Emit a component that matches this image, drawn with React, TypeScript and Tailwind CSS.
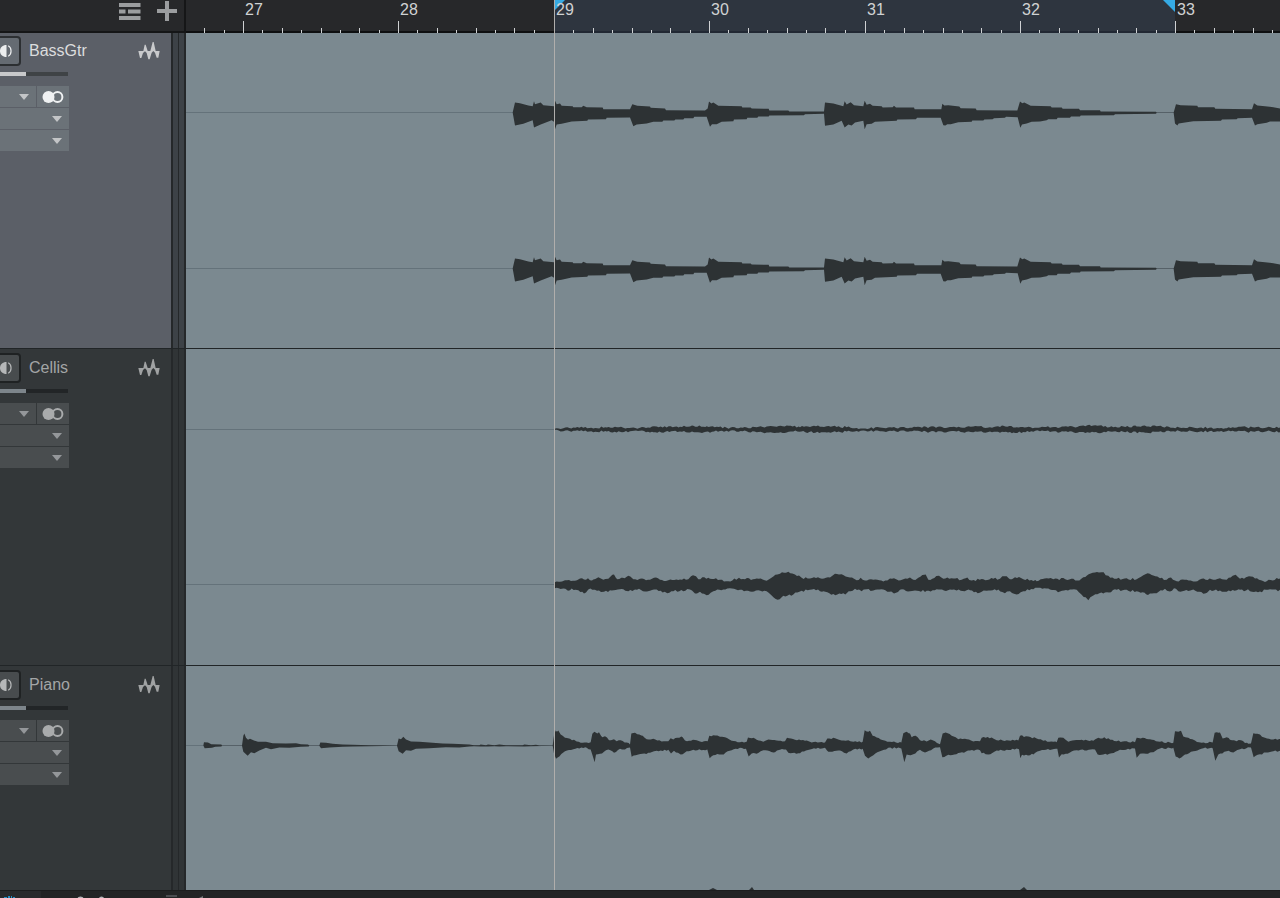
import React from "react";

type Points = [number, number][];

// Turns "x,y x,y" into pairs; units are thirds of a pixel.
const parse = (s: string): Points =>
  s.trim().split(/\s+/).map((p) => p.split(",").map(Number) as [number, number]);

// Adds small deterministic ripples between the control points.
function ripple(points: Points, amount: number): Points {
  if (!amount) return points;
  const out: Points = [];
  for (let i = 0; i < points.length - 1; i++) {
    const [x0, y0] = points[i];
    const [x1, y1] = points[i + 1];
    out.push([x0, y0]);
    for (let x = x0 + 6; x < x1 - 3; x += 6) {
      const t = (x - x0) / (x1 - x0);
      const n = Math.sin(x * 12.9898) * 43758.5453;
      out.push([x, y0 + (y1 - y0) * t + (n - Math.floor(n) - 0.5) * amount]);
    }
  }
  out.push(points[points.length - 1]);
  return out;
}

const BASS_TOP = `38,157 45,127 60,129 85,136 98,138 102,123 105,132 122,127 130,135 162,138 165,122 170,132 180,130 185,137 218,138 220,141 245,141 250,137 260,141 308,142 310,147 390,147 397,132 412,137 450,139 452,143 495,145 498,150 615,151 623,145 627,124 634,130 640,127 655,137 725,138 727,142 752,142 755,145 806,146 808,151 865,151 868,154 972,154 975,127 1000,130 1030,138 1034,123 1040,133 1052,126 1062,135 1090,138 1094,122 1100,134 1110,131 1118,137 1145,138 1148,142 1178,141 1182,137 1188,142 1242,142 1244,147 1324,147 1327,131 1333,136 1345,135 1378,139 1382,144 1427,145 1430,150 1552,151 1560,124 1567,129 1573,127 1592,137 1652,138 1655,142 1685,142 1688,146 1737,146 1740,150 1800,150 1802,154 1968,155 1970,157 2021,157 2028,132 2042,135 2092,137 2094,141 2143,141 2146,146 2256,147 2262,129 2272,136 2295,138 2320,141 2345,146`;
const BASS_BOTTOM = `38,157 45,196 70,191 98,180 102,202 122,193 155,180 162,185 165,207 170,193 185,191 215,184 262,182 264,178 318,177 320,173 390,172 400,198 410,193 440,190 460,185 487,185 490,181 523,181 526,178 550,178 553,174 580,174 583,170 620,170 630,200 636,192 650,192 665,185 700,183 702,178 740,177 742,173 772,173 775,169 806,169 808,166 912,165 915,162 972,161 975,197 1000,193 1025,182 1034,202 1045,193 1055,196 1065,187 1090,182 1094,207 1100,192 1115,191 1125,185 1190,182 1192,178 1248,177 1251,173 1322,173 1330,195 1336,196 1342,192 1352,192 1375,186 1415,185 1417,181 1450,181 1453,178 1478,177 1482,174 1515,173 1518,170 1553,171 1561,203 1566,193 1580,190 1595,185 1620,184 1640,180 1645,177 1670,177 1673,173 1710,173 1713,169 1740,169 1742,166 1842,165 1845,162 1968,161 1970,158 2021,158 2025,190 2032,196 2036,190 2055,187 2080,183 2163,182 2166,178 2210,177 2213,174 2256,173 2265,196 2272,192 2300,188 2310,184 2345,184`;

const CELLO_TOP = `44,97 60,96 75,91 105,93 120,86 160,89 175,82 190,90 205,87 222,74 232,88 248,84 265,78 280,88 300,87 330,90 348,83 360,90 385,91 420,89 445,88 453,79 468,79 475,88 493,82 510,87 540,90 565,94 597,84 615,88 650,86 685,90 700,80 720,72 745,66 765,74 785,84 810,86 840,85 870,83 885,72 905,73 930,83 950,91 962,84 975,92 1000,90 1030,95 1050,86 1070,89 1090,88 1110,83 1120,90 1135,84 1157,74 1165,90 1197,78 1210,87 1240,86 1265,90 1282,83 1295,92 1330,88 1380,87 1387,79 1400,79 1410,88 1425,82 1450,88 1490,94 1520,85 1540,88 1600,87 1618,92 1640,78 1665,68 1685,67 1705,78 1730,87 1790,88 1810,76 1823,70 1840,77 1860,85 1880,90 1893,83 1910,94 1940,90 1960,95 1985,87 2020,90 2040,85 2060,90 2087,75 2100,87 2127,79 2145,86 2180,94 2225,83`;
const CELLO_BOTTOM = `44,115 70,116 84,123 95,116 115,121 132,131 145,119 165,120 192,126 215,122 250,118 265,124 285,119 330,123 350,119 382,130 400,124 430,124 450,119 465,131 480,126 500,136 520,124 550,119 570,115 600,120 630,125 655,121 680,124 695,137 713,150 730,138 760,134 785,123 810,120 850,124 886,136 920,130 945,117 965,124 980,118 1000,122 1030,119 1062,131 1080,120 1110,124 1125,122 1160,123 1200,119 1250,122 1290,121 1313,130 1340,123 1375,119 1395,130 1410,124 1430,134 1450,124 1495,114 1530,119 1560,125 1610,120 1625,135 1645,151 1660,137 1695,128 1730,120 1790,124 1818,133 1850,130 1875,117 1890,125 1902,115 1915,124 1960,119 1995,131 2010,120 2060,126 2100,120 2160,125 2190,118 2225,124`;

const SOFT_TOP = `44,102 70,100 130,99 200,98 225,96 250,99 300,99 350,95 420,96 460,93 500,94 560,99 620,98 680,95 740,92 780,97 860,94 920,97 970,101 1020,98 1110,99 1170,96 1250,98 1300,95 1350,97 1390,93 1430,97 1500,98 1600,96 1660,92 1720,97 1790,95 1850,94 1900,99 1960,98 2060,100 2120,97 2180,98 2225,97`;
const SOFT_BOTTOM = `44,105 70,109 130,109 200,110 240,111 300,108 340,112 420,110 480,113 560,108 620,109 680,113 710,114 760,110 860,113 920,110 970,107 1020,109 1110,109 1170,111 1250,110 1300,112 1350,110 1420,113 1500,109 1600,112 1650,114 1720,110 1820,114 1900,109 1960,110 2060,109 2120,111 2180,109 2225,111`;

const PIANO_TOP = `38,91 42,60 47,46 51,50 55,46 62,58 75,68 90,71 110,79 140,82 152,81 157,56 163,50 172,55 177,51 187,66 195,63 207,75 222,72 230,78 242,75 260,82 270,88 274,55 285,53 292,57 308,62 320,72 340,71 365,79 385,78 392,69 400,73 412,68 428,66 435,76 470,75 480,79 503,78 508,62 520,60 540,65 555,66 575,77 600,81 620,80 624,67 640,68 650,74 670,80 685,73 710,76 735,78 741,68 765,74 800,76 815,82 855,82 862,70 885,69 905,76 925,75 940,80 968,80 974,45 985,50 990,47 998,62 1010,67 1030,75 1050,80 1084,82 1090,54 1100,50 1110,55 1115,66 1127,62 1140,75 1160,79 1172,73 1185,78 1200,87 1208,55 1217,52 1235,62 1255,72 1275,71 1300,79 1320,78 1325,68 1355,67 1370,75 1435,76 1440,62 1465,64 1490,70 1510,77 1550,81 1555,68 1570,68 1585,80 1625,74 1660,77 1675,68 1705,69 1730,78 1785,81 1790,68 1830,72 1860,80 1900,83 1905,48 1915,50 1923,47 1930,64 1945,68 1965,76 1985,83 2018,82 2024,53 2040,52 2048,70 2060,66 2070,74 2090,78 2103,75 2125,86 2133,85 2140,54 2160,58 2175,68 2200,73 2225,70`;
const PIANO_BOTTOM = `38,91 42,115 48,131 58,124 75,108 100,102 140,98 152,103 158,122 164,141 168,118 180,116 205,103 222,113 240,101 255,103 270,97 275,125 295,118 330,113 350,107 385,104 393,115 402,107 422,118 440,108 460,104 502,103 509,129 520,120 545,118 575,105 600,98 618,101 626,124 635,115 650,116 670,105 705,111 720,104 738,103 745,113 780,114 810,103 855,98 865,110 900,106 920,115 940,103 968,101 975,122 985,130 1000,120 1020,108 1045,98 1084,100 1093,141 1100,118 1120,117 1140,104 1155,112 1180,100 1200,96 1207,126 1225,119 1260,113 1290,106 1320,105 1325,114 1345,118 1370,106 1437,102 1441,129 1446,119 1480,118 1500,107 1552,101 1557,127 1565,117 1590,112 1610,105 1640,106 1665,103 1673,118 1690,118 1715,114 1740,104 1785,100 1790,128 1800,116 1840,111 1860,100 1900,98 1907,124 1918,130 1935,118 1960,108 1990,99 2018,99 2026,137 2035,118 2060,108 2080,112 2100,102 2133,97 2141,126 2160,117 2200,108 2225,106`;

const INTRO_TOP = `52,91 54,81 66,82 76,87 106,88 108,91 168,91 172,62 175,55 180,68 186,74 192,71 204,76 216,80 240,80 260,84 300,85 330,84 345,87 366,88 370,91 400,91 403,82 420,83 440,86 470,88 500,89 550,90 633,91 638,70 645,72 652,65 660,73 675,79 700,80 730,82 770,85 800,86 850,88 864,90 880,90 884,88 900,90 906,88 925,90 940,88 960,90 1010,90 1015,88 1035,90 1050,89 1060,91 1104,91`;
const INTRO_BOTTOM = `52,91 56,99 78,98 88,95 106,94 108,92 168,92 172,110 185,122 195,111 205,114 220,106 240,98 255,102 280,97 310,98 345,95 368,94 370,92 400,92 405,99 430,97 470,95 500,94 550,93 633,92 638,108 650,116 660,105 675,107 690,101 730,99 780,96 820,97 850,94 864,93 884,94 906,94 925,93 940,94 960,93 1015,94 1035,93 1104,92`;

interface WaveProps {
  x: number;
  y: number;
  base: number;
  top: string;
  bottom: string;
  noise?: number;
}

function Wave({ x, y, base, top, bottom, noise = 0 }: WaveProps) {
  const outline = [...ripple(parse(top), noise), ...ripple(parse(bottom), noise).reverse()];
  return (
    <polygon
      transform={`translate(${x} ${y + 0.5}) scale(0.33333) translate(0 ${-base})`}
      points={outline.map((p) => p.join(",")).join(" ")}
      fill="#2d3234"
    />
  );
}

function ZeroLine({ y }: { y: number }) {
  return <rect x="0" y={y} width="100%" height="1" fill="#64727a" />;
}

function Caret({ className }: { className: string }) {
  return (
    <svg className={"pointer-events-none absolute top-2 h-1.5 w-2.5 " + className} viewBox="0 0 10 6" aria-hidden="true">
      <path d="M0 0H10L5 6Z" fill="currentColor" />
    </svg>
  );
}

function WaveIcon() {
  return (
    <svg className="block h-[18px] w-[22px]" viewBox="0 0 64 54" aria-hidden="true">
      <path
        d="M0 27H15L19 8H22L28 27H36L43 0H46L52 27H64L60 47H55L50 32L45 27L40 32L34 52H30L25 33L20 28L14 33L9 48H5Z"
        fill="currentColor"
      />
    </svg>
  );
}

interface Palette {
  panel: string;
  strip: string;
  field: string;
  button: string;
  slider: string;
  text: string;
  icon: string;
  stereo: string;
  caret: string;
}

const SELECTED: Palette = {
  panel: "bg-[#5b5f67]",
  strip: "bg-[#3d4247]",
  field: "bg-[#6b7278]",
  button: "bg-[#656b72] border-[#2c2f32] text-[#eceeef]",
  slider: "bg-[linear-gradient(to_right,#c8c9cb_26px,#3f4346_26px)]",
  text: "text-[#dcddde]",
  icon: "text-[#c9cacc]",
  stereo: "text-[#eff1f2]",
  caret: "text-[#c3c5c7]",
};

const NORMAL: Palette = {
  panel: "bg-[#333739]",
  strip: "bg-[#303436]",
  field: "bg-[#494d4f]",
  button: "bg-[#484c4e] border-[#1f2223] text-[#b5b7b8]",
  slider: "bg-[linear-gradient(to_right,#7d858b_26px,#222527_26px)]",
  text: "text-[#a3a5a6]",
  icon: "text-[#a0a2a3]",
  stereo: "text-[#a9abac]",
  caret: "text-[#94979a]",
};

function Field({ label, palette, width, caret }: { label: string; palette: Palette; width: string; caret: string }) {
  return (
    <div className={"relative h-[21px] " + width}>
      <select aria-label={label} className={"block h-full w-full appearance-none " + palette.field}>
        <option />
      </select>
      <Caret className={caret + " " + palette.caret} />
    </div>
  );
}

function Track({ name, selected, children }: { name: string; selected?: boolean; children: React.ReactNode }) {
  const p = selected ? SELECTED : NORMAL;
  return (
    <section className="flex h-[317px] shrink-0 border-b border-[#212527]">
      <div className={"w-[171px] shrink-0 overflow-hidden pt-1 " + p.panel}>
        <div className="flex h-[30px] items-center">
          <button aria-label={"Monitor " + name} className={"h-[30px] w-[21px] shrink-0 rounded-r-[4px] border-2 border-l-0 " + p.button}>
            <svg className="block h-3 w-3" viewBox="0 0 12 12" aria-hidden="true">
              <path d="M6.500 0V12C2.500 12 0 9.500 0 6S2.500 0 6.500 0Z" fill="currentColor" />
              <path d="M8.200 0.800C12 2.500 12 9.500 8.200 11.200" fill="none" stroke="currentColor" strokeWidth="1.2" />
            </svg>
          </button>
          <h2 className={"ml-2 flex-1 text-base leading-5 " + p.text}>{name}</h2>
          <span className={"mr-[11px] " + p.icon}>
            <WaveIcon />
          </span>
        </div>
        <input
          type="range"
          aria-label={name + " volume"}
          defaultValue={38}
          className={
            "mt-1.5 block h-1 w-[68px] appearance-none [&::-webkit-slider-thumb]:h-0 [&::-webkit-slider-thumb]:w-0 [&::-webkit-slider-thumb]:appearance-none " +
            p.slider
          }
        />
        <div className="mt-[10px] flex w-[69px] flex-col gap-px">
          <div className="flex gap-px">
            <Field label={name + " mode"} palette={p} width="w-9" caret="left-[19px]" />
            <button aria-label={name + " stereo"} className={"flex h-[21px] flex-1 items-center justify-center " + p.field + " " + p.stereo}>
              <svg className="h-3 w-[22px]" viewBox="0 0 22 12" aria-hidden="true">
                <circle cx="6.5" cy="6" r="6" fill="currentColor" />
                <circle cx="15.5" cy="6" r="4.9" fill="none" stroke="currentColor" strokeWidth="2" />
              </svg>
            </button>
          </div>
          <Field label={name + " input"} palette={p} width="w-full" caret="left-[52px]" />
          <Field label={name + " output"} palette={p} width="w-full" caret="left-[52px]" />
        </div>
      </div>
      <div className={"w-[15px] shrink-0 border-x-2 border-[#25282a] px-[5px] " + p.strip}>
        <div className="h-full w-px bg-[#25282a]" />
      </div>
      <div className="min-w-0 flex-1 bg-[#7b8990]">
        <svg className="block h-full w-full" role="img" aria-label={name + " waveform"}>
          {children}
        </svg>
      </div>
    </section>
  );
}

const BARS = [
  { n: 27, width: "w-[155px]", loop: false },
  { n: 28, width: "w-[156px]", loop: false },
  { n: 29, width: "w-[155px]", loop: true },
  { n: 30, width: "w-[156px]", loop: true },
  { n: 31, width: "w-[155px]", loop: true },
  { n: 32, width: "w-[155px]", loop: true },
  { n: 33, width: "w-[155px]", loop: false },
];

function Ticks({ from = 0 }: { from?: number }) {
  const shift = from ? 57 - 155 : 0;
  return (
    <svg className="absolute bottom-0 left-0 h-3 w-full" aria-hidden="true">
      {[0, 1, 2, 3, 4, 5, 6, 7].slice(from).map((i) => {
        const h = i === 0 ? 12 : i % 2 === 0 ? 5 : 3;
        return <rect key={i} x={Math.round(i * 19.4) + shift} y={12 - h} width="1" height={h} fill="#cfd1d3" />;
      })}
    </svg>
  );
}

export default function App() {
  return (
    <main className="relative flex h-screen flex-col overflow-hidden bg-[#232425] font-['Liberation_Sans',Arial,sans-serif]">
      <header className="relative -mb-px flex h-[33px] shrink-0 bg-[#27282a]">
        <div className="flex w-[186px] shrink-0 items-start justify-end gap-4 border-r-2 border-b-2 border-[#151617] pr-[7px] text-[#9b9d9f]">
          <button aria-label="Track list" className="pt-[3px]">
            <svg className="block h-[18px] w-[22px]" viewBox="0 0 22 18" aria-hidden="true">
              <path d="M0 0H21.500V4H0ZM0 6.500H6.500V10.500H0ZM9 6.500H21.500V10.500H9ZM0 13H21.500V17H0Z" fill="currentColor" />
            </svg>
          </button>
          <button aria-label="Add track" className="pt-px">
            <svg className="block h-5 w-5" viewBox="0 0 20 20" aria-hidden="true">
              <path d="M8 0H12V8H20V12H12V20H8V12H0V8H8Z" fill="currentColor" />
            </svg>
          </button>
        </div>
        <div className="flex min-w-0 flex-1 overflow-hidden">
          <div className="relative w-[57px] shrink-0 border-b-2 border-[#0e0f10]">
            <div className="absolute inset-x-0 -bottom-0.5 h-3">
              <Ticks from={5} />
            </div>
          </div>
          {BARS.map((bar) => (
            <div
              key={bar.n}
              className={
                "relative shrink-0 border-b-2 pl-0.5 " +
                bar.width +
                (bar.loop ? " border-[#212833] bg-[#2e353f]" : " border-[#0e0f10]")
              }
            >
              {bar.n === 29 && (
                <svg className="absolute top-0 left-0 h-3 w-3" viewBox="0 0 12 12" aria-hidden="true">
                  <path d="M0 0H11L0 11Z" fill="#35aae4" />
                </svg>
              )}
              {bar.n === 32 && (
                <svg className="absolute top-0 right-0 h-3 w-3" viewBox="0 0 12 12" aria-hidden="true">
                  <path d="M0 0H12V12Z" fill="#35aae4" />
                </svg>
              )}
              <span className="relative block text-base leading-5 text-[#d0d2d3]">{bar.n}</span>
              <div className="absolute inset-x-0 -bottom-0.5 h-3">
                <Ticks />
              </div>
            </div>
          ))}
        </div>
      </header>

      <div className="flex min-h-0 flex-1 flex-col overflow-hidden">
        <Track name="BassGtr" selected>
          <ZeroLine y={80} />
          <ZeroLine y={236} />
          <Wave x={314} y={80} base={157} top={BASS_TOP} bottom={BASS_BOTTOM} />
          <Wave x={314} y={236} base={157} top={BASS_TOP} bottom={BASS_BOTTOM} />
        </Track>
        <Track name="Cellis">
          <ZeroLine y={80} />
          <ZeroLine y={235} />
          <Wave x={354} y={80} base={104} top={SOFT_TOP} bottom={SOFT_BOTTOM} noise={6} />
          <Wave x={354} y={235} base={104} top={CELLO_TOP} bottom={CELLO_BOTTOM} noise={7} />
        </Track>
        <Track name="Piano">
          <ZeroLine y={79} />
          <Wave x={0} y={79} base={91} top={INTRO_TOP} bottom={INTRO_BOTTOM} />
          <Wave x={354} y={79} base={91} top={PIANO_TOP} bottom={PIANO_BOTTOM} noise={5} />
          <path d="M523 224L527 222L531 224ZM563 224L566 221L568 224ZM834 224L838 221L841 224Z" fill="#2d3234" />
        </Track>
      </div>

      <footer className="h-2 shrink-0 overflow-hidden border-t border-[#1c1d1e] bg-[#232425]">
        <svg className="block h-[7px] w-full" aria-hidden="true">
          <rect width="41" height="7" fill="#292a2c" />
          <path d="M4 6h3v1H4zM8 5h2v2H8zM11 5h1v2h-1zM13 6h2v1h-2z" fill="#2590c8" />
          <ellipse cx="80.5" cy="7.5" rx="3" ry="2" fill="#b4b6b8" />
          <ellipse cx="101.5" cy="7.5" rx="2.500" ry="2" fill="#b4b6b8" />
          <rect x="166" y="4" width="11" height="2" fill="#4b4d50" />
          <path d="M199 7L203 5V7Z" fill="#77797b" />
        </svg>
      </footer>

      <div className="pointer-events-none absolute top-0 bottom-2 left-[554px] w-px bg-[#b0aeac]" />
    </main>
  );
}
